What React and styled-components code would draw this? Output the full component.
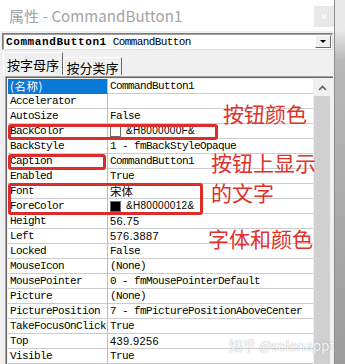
import React from "react";
import styled, { createGlobalStyle, css } from "styled-components";

const GlobalStyle = createGlobalStyle`
  html, body {
    margin: 0;
    padding: 0;
    background: #a9a9a9;
  }
  #root {
    width: 345px;
    height: 364px;
    overflow: hidden;
  }
`;

const Page = styled.div`
  display: flex;
  width: 345px;
  height: 364px;
  background: linear-gradient(to bottom, #e9e9e9 0px, #e9e9e9 30px, #b9b9b9 60px, #9c9c9c 100%);
`;

const Window = styled.div`
  width: 335px;
  height: 364px;
  display: flex;
  flex-direction: column;
  background: #f0f0f0;
  border-right: 1px solid #8c8c8c;
  box-sizing: border-box;
`;

const TitleBar = styled.div`
  height: 31px;
  flex: none;
  display: flex;
  align-items: center;
  justify-content: space-between;
  background: #ffffff;
  padding-left: 9px;
`;

const Title = styled.span`
  font-family: "Noto Sans CJK SC", "Noto Sans", sans-serif;
  font-size: 15px;
  color: #a3a3a3;
  letter-spacing: 0.1px;
`;

const CloseBox = styled.div`
  width: 20px;
  height: 21px;
  margin-top: 2px;
  background: #e8e8e8;
  color: #ffffff;
  font-family: "DejaVu Sans", sans-serif;
  font-size: 9px;
  display: flex;
  align-items: center;
  justify-content: center;
`;

const Body = styled.div`
  flex: 1;
  display: flex;
  flex-direction: column;
  padding: 2px 1px 0 2px;
  min-height: 0;
`;

const mono = css`
  font-family: "Liberation Mono", "DejaVu Sans Mono", monospace;
  font-size: 11px;
  letter-spacing: -0.6px;
`;

const Combo = styled.div`
  height: 15px;
  display: flex;
  align-items: center;
  background: #ffffff;
  border: 1px solid #7a7a7a;
  border-right-color: #dcdcdc;
  border-bottom-color: #dcdcdc;
  box-shadow: inset 1px 1px 0 #a0a0a0;
  padding-left: 3px;
  ${mono};
  color: #000;
`;

const ComboName = styled.b`
  letter-spacing: 0.6px;
  margin-right: 6px;
`;

const ComboText = styled.span`
  flex: 1;
`;

const DropBtn = styled.div`
  width: 14px;
  height: 11px;
  margin-right: 1px;
  background: #f0f0f0;
  border: 1px solid #ffffff;
  border-right-color: #6e6e6e;
  border-bottom-color: #6e6e6e;
  display: flex;
  align-items: center;
  justify-content: center;
`;

const Arrow = styled.div`
  width: 0;
  height: 0;
  border-left: 3px solid transparent;
  border-right: 3px solid transparent;
  border-top: 3px solid #000;
`;

const Tabs = styled.div`
  display: flex;
  align-items: flex-end;
  height: 23px;
  margin-top: 2px;
  padding-left: 1px;
`;

const Tab = styled.div`
  height: ${(p) => (p.active ? 23 : 18)}px;
  width: ${(p) => (p.active ? 60 : 59)}px;
  box-sizing: border-box;
  border-top: 1px solid #ffffff;
  border-left: 1px solid #ffffff;
  border-right: 1px solid #696969;
  background: #f0f0f0;
  font-family: "Noto Sans CJK SC", sans-serif;
  font-size: 13px;
  color: #000;
  display: flex;
  align-items: center;
  justify-content: center;
  padding-top: ${(p) => (p.active ? 0 : 1)}px;
`;

const Frame = styled.div`
  flex: 1;
  min-height: 0;
  margin: 1px 0 0 3px;
  width: 328px;
  box-sizing: border-box;
  border-top: 1px solid #a0a0a0;
  border-left: 1px solid #a0a0a0;
  box-shadow: inset 1px 1px 0 #696969;
  padding: 2px 0 0 2px;
  display: flex;
  background: #f0f0f0;
`;

const Grid = styled.div`
  position: relative;
  width: 305px;
  background: #ffffff;
`;

const Row = styled.div`
  display: grid;
  grid-template-columns: 100px 1fr;
  height: 15px;
`;

const Name = styled.div`
  ${mono};
  line-height: 14px;
  padding-left: 2px;
  border-right: 1px solid #bcbcbc;
  border-bottom: 1px solid #cccccc;
  white-space: nowrap;
  ${(p) =>
    p.selected &&
    css`
      background: #0a78d7;
      color: #ffffff;
      font-family: "Noto Sans CJK SC", sans-serif;
      font-size: 11.5px;
      letter-spacing: 0.5px;
      border-bottom-color: #0a78d7;
    `}
`;

const Value = styled.div`
  ${mono};
  line-height: 14px;
  padding-left: 2px;
  border-bottom: 1px solid #cccccc;
  white-space: nowrap;
  display: flex;
  align-items: center;
  ${(p) =>
    p.kind === "sans" &&
    css`
      font-family: "Liberation Sans", Arial, sans-serif;
      font-size: 11px;
      letter-spacing: 0.4px;
    `}
  ${(p) =>
    p.kind === "cjk" &&
    css`
      font-family: "Noto Sans CJK SC", sans-serif;
      font-size: 11.5px;
      letter-spacing: 0;
    `}
`;

const Swatch = styled.span`
  width: 9px;
  height: 9px;
  margin-right: 5px;
  background: ${(p) => p.color};
  border: 1px solid #6a6a6a;
  flex: none;
`;

const SwatchText = styled.span`
  font-family: "Liberation Sans", Arial, sans-serif;
  font-size: 10px;
  letter-spacing: 0.3px;
`;

const ScrollBar = styled.div`
  width: 16px;
  margin-left: 1px;
  background: #d0d0d0;
  border-right: 1px solid #f4f4f4;
  display: flex;
  flex-direction: column;
`;

const ScrollUp = styled.div`
  height: 17px;
  background: #f0f0f0;
  display: flex;
  align-items: center;
  justify-content: center;
  margin-bottom: 2px;
`;

const RedBox = styled.div`
  position: absolute;
  box-sizing: border-box;
  border: 3px solid #dd2c2c;
  border-radius: 3px;
  left: ${(p) => p.x}px;
  top: ${(p) => p.y}px;
  width: ${(p) => p.w}px;
  height: ${(p) => p.h}px;
`;

const Note = styled.div`
  position: absolute;
  left: ${(p) => p.x}px;
  top: ${(p) => p.y}px;
  font-family: "Noto Sans CJK SC", sans-serif;
  font-size: 21px;
  line-height: 21px;
  color: #e0302a;
  white-space: nowrap;
`;

const Watermark = styled.div`
  position: absolute;
  left: 221px;
  top: 257px;
  font-family: "Noto Sans CJK SC", sans-serif;
  font-size: 13.5px;
  line-height: 18px;
  color: rgba(255, 255, 255, 0.95);
  text-shadow: 0 0 1px rgba(110, 110, 110, 0.7);
  white-space: nowrap;
`;

const rows = [
  { n: "(名称)", v: "CommandButton1", selected: true },
  { n: "Accelerator", v: "" },
  { n: "AutoSize", v: "False" },
  { n: "BackColor", v: "&H8000000F&", swatch: "#ffffff" },
  { n: "BackStyle", v: "1 - fmBackStyleOpaque" },
  { n: "Caption", v: "CommandButton1" },
  { n: "Enabled", v: "True" },
  { n: "Font", v: "宋体", kind: "cjk" },
  { n: "ForeColor", v: "&H80000012&", swatch: "#000000" },
  { n: "Height", v: "56.75", kind: "sans" },
  { n: "Left", v: "576.3887", kind: "sans" },
  { n: "Locked", v: "False" },
  { n: "MouseIcon", v: "(None)" },
  { n: "MousePointer", v: "0 - fmMousePointerDefault" },
  { n: "Picture", v: "(None)" },
  { n: "PicturePosition", v: "7 - fmPicturePositionAboveCenter" },
  { n: "TakeFocusOnClick", v: "True" },
  { n: "Top", v: "439.9256", kind: "sans" },
  { n: "Visible", v: "True" },
];

const App = () => {
  return (
    <Page>
      <GlobalStyle />
      <Window>
        <TitleBar>
          <Title>属性 - CommandButton1</Title>
          <CloseBox>✕</CloseBox>
        </TitleBar>
        <Body>
          <Combo>
            <ComboName>CommandButton1</ComboName>
            <ComboText>CommandButton</ComboText>
            <DropBtn>
              <Arrow />
            </DropBtn>
          </Combo>
          <Tabs>
            <Tab active>按字母序</Tab>
            <Tab>按分类序</Tab>
          </Tabs>
          <Frame>
            <Grid>
              {rows.map((r) => (
                <Row key={r.n}>
                  <Name selected={r.selected}>{r.n}</Name>
                  <Value kind={r.kind}>
                    {r.swatch && <Swatch color={r.swatch} />}
                    {r.swatch ? <SwatchText>{r.v}</SwatchText> : r.v}
                  </Value>
                </Row>
              ))}
              <RedBox x={0} y={45} w={210} h={16} />
              <RedBox x={0} y={75} w={98} h={16} />
              <RedBox x={0} y={104} w={195} h={32} />
              <Note x={215} y={24}>按钮颜色</Note>
              <Note x={203} y={73}>按钮上显示</Note>
              <Note x={203} y={103}>的文字</Note>
              <Note x={200} y={149}>字体和颜色</Note>
              <Watermark>知乎 @selenappt</Watermark>
            </Grid>
            <ScrollBar>
              <ScrollUp>
                <svg width="9" height="6" viewBox="0 0 9 6">
                  <path d="M1 5 L4.5 1.5 L8 5" fill="none" stroke="#606060" strokeWidth="1.6" />
                </svg>
              </ScrollUp>
            </ScrollBar>
          </Frame>
        </Body>
      </Window>
    </Page>
  );
};

export default App;
